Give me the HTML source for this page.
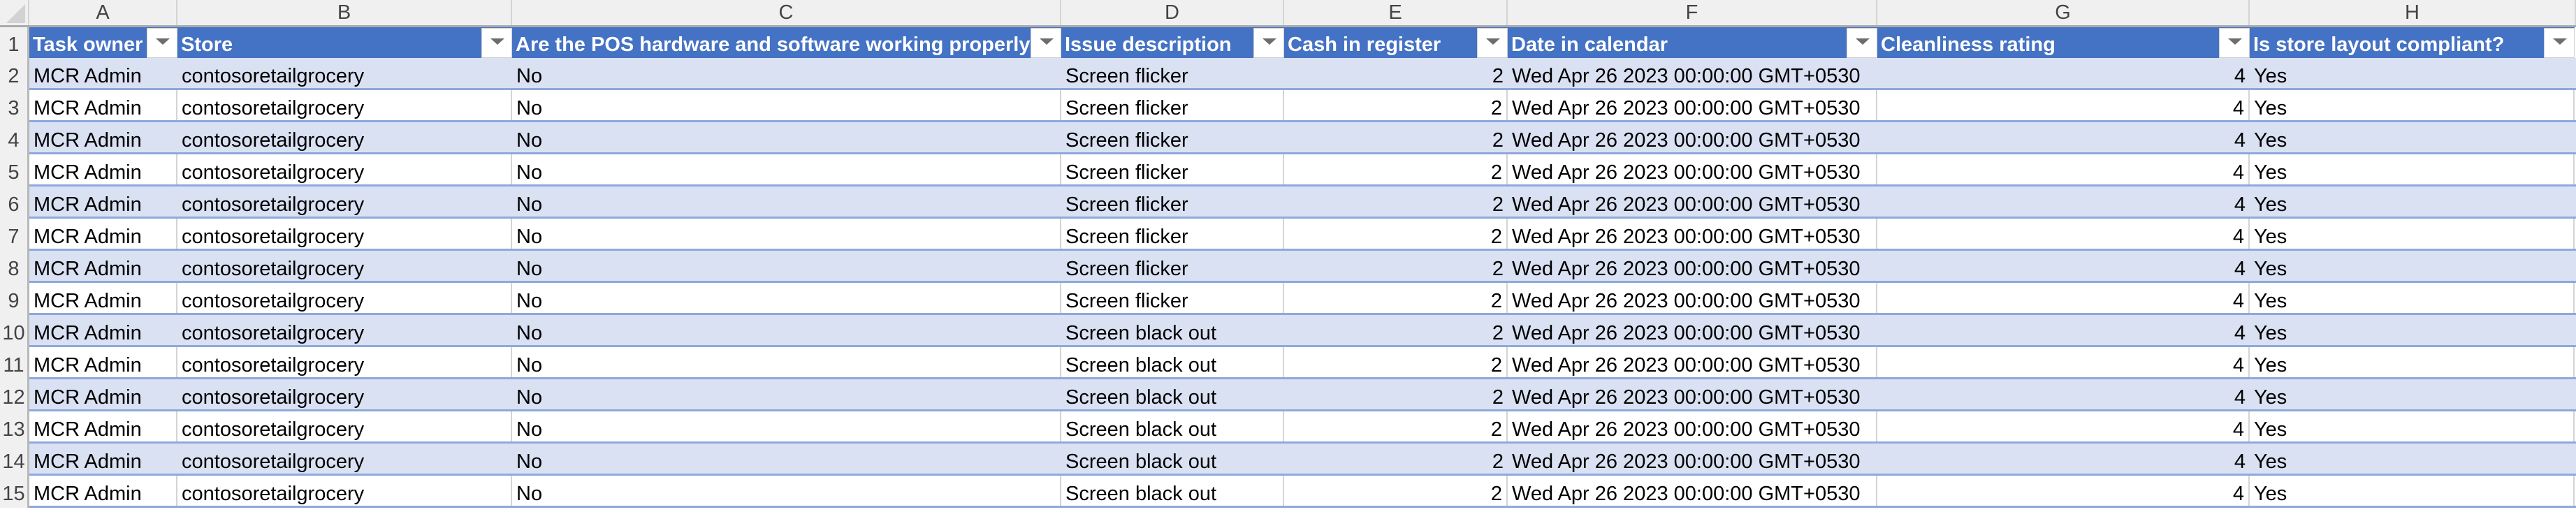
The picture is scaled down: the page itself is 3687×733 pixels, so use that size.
<!DOCTYPE html>
<html><head><meta charset="utf-8"><style>
*{margin:0;padding:0;box-sizing:border-box}
body{width:3687px;height:728px;overflow:hidden;background:#fff;font-family:"Liberation Sans",Arial,sans-serif;position:relative}
.ch{position:absolute;top:0;height:37px;background:#f0f0f0;border-right:2px solid #d4d4d4;color:#444;font-size:29px;text-align:center;line-height:37px}
.chline{position:absolute;top:36px;left:0;width:3687px;height:3px;background:#ababab}
.rn{position:absolute;left:0;width:42px;background:#f0f0f0;color:#444;font-size:29px;text-align:center;border-right:3px solid #b8b8b8}
.row{position:absolute;left:42px;width:3645px;height:46px;border-bottom:3px solid #8ea9db}
.row.b{background:#d9e1f2}
.c{position:absolute;top:0;height:43px;font-size:29px;color:#000;line-height:34px;padding:9px 0 0 6px;white-space:nowrap;overflow:hidden}
.row.w .c{border-right:2px solid #d4d4d4}
.r{text-align:right;padding-right:6px;padding-left:0}
.h{position:absolute;top:40px;height:43px;background:#4472c4;color:#fff;font-weight:bold;font-size:29px;line-height:34px;padding:7px 0 0 5px;white-space:nowrap;overflow:hidden}
.dd{position:absolute;top:0;right:0;width:44px;height:43px;background:#fff;border:1px solid #d0d0d0}
.dd:after{content:"";position:absolute;left:12px;top:14px;border-left:10px solid transparent;border-right:10px solid transparent;border-top:9px solid #6d6d6d}
</style></head><body>
<div class="ch" style="left:0;width:42px"><svg width="42" height="37"><polygon points="36,6 36,33 9,33" fill="#d2d2d2"/></svg></div>
<div class="ch" style="left:42px;width:212px">A</div>
<div class="ch" style="left:254px;width:479px">B</div>
<div class="ch" style="left:733px;width:786px">C</div>
<div class="ch" style="left:1519px;width:319px">D</div>
<div class="ch" style="left:1838px;width:320px">E</div>
<div class="ch" style="left:2158px;width:529px">F</div>
<div class="ch" style="left:2687px;width:533px">G</div>
<div class="ch" style="left:3220px;width:467px">H</div>
<div class="chline"></div>
<div style="position:absolute;left:42px;top:39px;width:3643px;height:44px;background:#4472c4;border-bottom:1px solid #8ea9db"></div>
<div class="h" style="left:42px;width:212px">Task owner<div class="dd"></div></div>
<div class="h" style="left:254px;width:479px">Store<div class="dd"></div></div>
<div class="h" style="left:733px;width:786px">Are the POS hardware and software working properly?<div class="dd"></div></div>
<div class="h" style="left:1519px;width:319px">Issue description<div class="dd"></div></div>
<div class="h" style="left:1838px;width:320px">Cash in register<div class="dd"></div></div>
<div class="h" style="left:2158px;width:529px">Date in calendar<div class="dd"></div></div>
<div class="h" style="left:2687px;width:533px">Cleanliness rating<div class="dd"></div></div>
<div class="h" style="left:3220px;width:465px">Is store layout compliant?<div class="dd"></div></div>
<div class="rn" style="top:39px;height:44px;line-height:50px">1</div>
<div id="rows"></div>
<script>
var h='';
for(var i=2;i<=15;i++){
 var t=83+(i-2)*46;
 var d=i<=9?'Screen flicker':'Screen black out';
 h+='<div class="rn" style="top:'+t+'px;height:46px;line-height:52px">'+i+'</div>';
 h+='<div class="row '+(i%2==0?'b':'w')+'" style="top:'+t+'px">'+
 '<div class="c" style="left:0;width:212px">MCR Admin</div>'+
 '<div class="c" style="left:212px;width:479px">contosoretailgrocery</div>'+
 '<div class="c" style="left:691px;width:786px">No</div>'+
 '<div class="c" style="left:1477px;width:319px">'+d+'</div>'+
 '<div class="c r" style="left:1796px;width:320px">2</div>'+
 '<div class="c" style="left:2116px;width:529px">Wed Apr 26 2023 00:00:00 GMT+0530</div>'+
 '<div class="c r" style="left:2645px;width:533px">4</div>'+
 '<div class="c" style="left:3178px;width:465px">Yes</div></div>';
}
document.getElementById('rows').outerHTML=h;
</script>
</body></html>
